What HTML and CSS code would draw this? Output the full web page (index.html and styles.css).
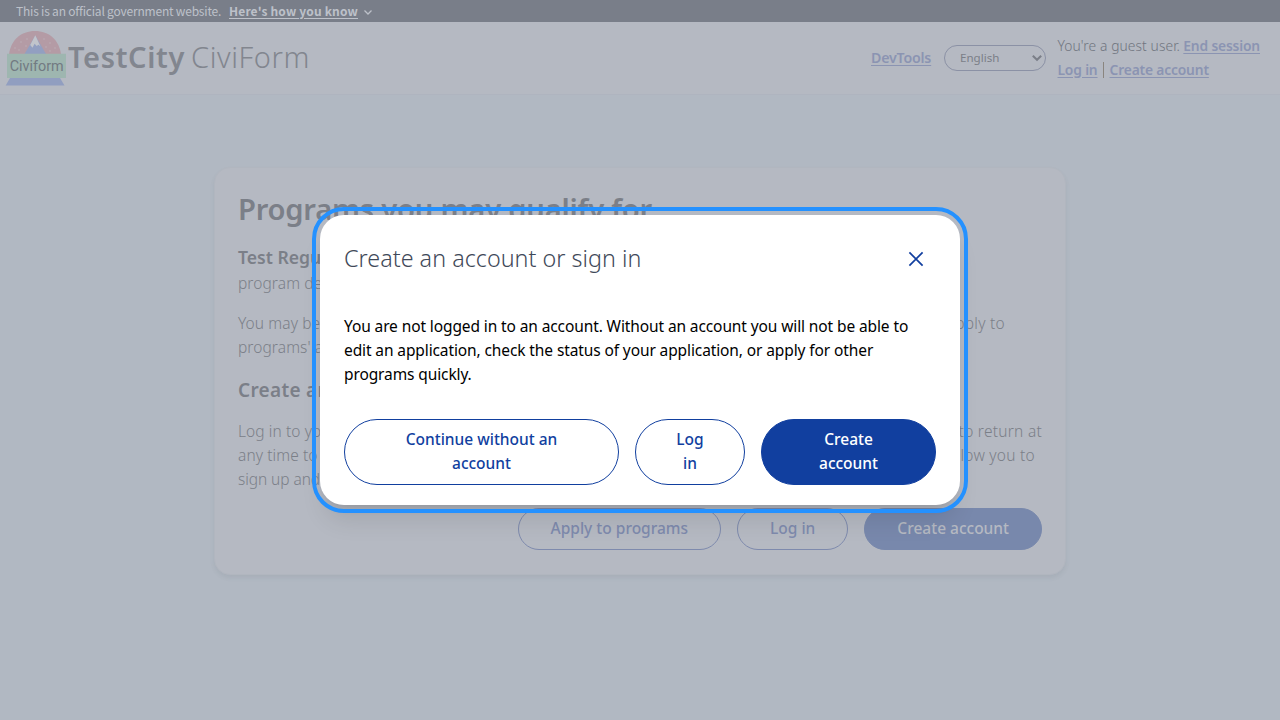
FILE: index.html
```html
<!DOCTYPE html>
<html lang="en">
<head>
<meta charset="utf-8">
<title>TestCity CiviForm</title>
<link rel="stylesheet" href="styles.css">
</head>
<body>
<div class="banner">
  <span class="banner-text">This is an official government website.</span>
  <a class="banner-link">Here's how you know</a>
  <svg class="banner-chevron" width="10" height="8" viewBox="0 0 10 8"><path d="M1.5 2.5 5 6 8.5 2.5" fill="none" stroke="currentColor" stroke-width="1.3"/></svg>
</div>
<header class="header">
  <svg class="logo" width="62" height="58" viewBox="5 29 62 58">
    <path d="M9 54C11 40 21 31 35 31S59 40 61 54Z" fill="#b49ba5"/>
    <path d="M24.5 54 35.3 35.5 46 54Z" fill="#929fc1"/>
    <path d="M35.3 35.2 40.5 46.5 38.5 44.7 36.7 46 34.6 43.7 32.5 47.8 30.2 45Z" fill="#c1c4cb"/>
    <g fill="#bdb1b9"><circle cx="27" cy="39" r=".7"/><circle cx="21" cy="42" r=".7"/><circle cx="26" cy="46" r=".7"/><circle cx="19" cy="50" r=".7"/><circle cx="15" cy="48" r=".7"/><circle cx="44" cy="39" r=".7"/><circle cx="50" cy="43" r=".7"/><circle cx="46" cy="47" r=".7"/><circle cx="55" cy="48" r=".7"/><circle cx="50" cy="51" r=".7"/></g>
    <path d="M7 53.7H66V78H7Z" fill="#9eb6b0"/>
    <path d="M10 78H60L64.5 85.5H5.7Z" fill="#919ec0"/>
    <text class="logo-text" x="9.7" y="71.3" textLength="54" lengthAdjust="spacingAndGlyphs">Civiform</text>
  </svg>
  <div class="brand"><b class="brand-city">TestCity</b><span class="brand-app">CiviForm</span></div>
  <nav class="nav">
    <a class="link devtools">DevTools</a>
    <div class="select"><span>English</span>
      <svg width="10" height="8" viewBox="0 0 10 8"><path d="M.8 1.7 5 5.8 9.2 1.7" fill="none" stroke="currentColor" stroke-width="2"/></svg>
    </div>
    <div class="account">
      <div class="account-row"><span class="guest">You're a guest user.</span><a class="link">End session</a></div>
      <div class="account-row"><a class="link">Log in</a><span class="divider"></span><a class="link">Create account</a></div>
    </div>
  </nav>
</header>
<main class="card">
  <h1 class="card-title">Programs you may qualify for</h1>
  <h2 class="program">Test Regular Program</h2>
  <p class="text">program description</p>
  <div class="text eligible">
    <div class="line line-apply"><span>You may be eligible for other programs.</span><span class="end">Continue to apply to</span></div>
    <div class="line">programs' applications</div>
  </div>
  <h2 class="create-title">Create an account or sign in</h2>
  <div class="text login-text">
    <div class="line line-return"><span>Log in to your account or create one</span><span class="end">to return at</span></div>
    <div class="line line-allow"><span>any time to edit your application</span><span class="end">and will allow you to</span></div>
    <div class="line tight">sign up and apply for other programs.</div>
  </div>
  <div class="card-actions">
    <button class="btn muted">Apply to programs</button>
    <button class="btn muted">Log in</button>
    <button class="btn muted-solid">Create account</button>
  </div>
</main>
<section class="modal" role="dialog" aria-labelledby="modal-title">
  <div class="modal-head">
    <h2 class="modal-title" id="modal-title">Create an account or sign in</h2>
    <svg class="close" width="16" height="16" viewBox="0 0 16 16"><path d="M1.4 1.4 14.6 14.6M14.6 1.4 1.4 14.6" stroke="currentColor" stroke-width="1.7"/></svg>
  </div>
  <p class="modal-text">You are not logged in to an account. Without an account you will not be able to<br>edit an application, check the status of your application, or apply for other<br>programs quickly.</p>
  <div class="modal-actions">
    <button class="btn outline">Continue without an<br>account</button>
    <button class="btn outline">Log<br>in</button>
    <button class="btn solid">Create<br>account</button>
  </div>
</section>
</body>
</html>
```
FILE: styles.css
```css
* { box-sizing: border-box; }

body {
  margin: 0;
  height: 720px;
  overflow: hidden;
  background: #b1b8c2;
  color: #7b7f88;
  font-family: "Noto Sans", sans-serif;
}

h1, h2, p { margin: 0; }

/* Government banner */
.banner {
  display: flex;
  align-items: center;
  height: 22px;
  padding-left: 16px;
  background: #797e89;
  color: #bdc1c9;
  font-family: "Noto Sans CJK SC", sans-serif;
  font-size: 12px;
  line-height: 22px;
  white-space: nowrap;
}
.banner-text { width: 213px; letter-spacing: -0.2px; }
.banner-link {
  width: 129px;
  font-weight: 700;
  letter-spacing: 0.16px;
  text-decoration: underline;
  text-underline-offset: 2px;
}
.banner-chevron { margin: 1px 0 0 5px; }

/* Header */
.header {
  display: flex;
  align-items: center;
  height: 73px;
  padding: 0 20px 1px 5px;
  background: #b5b9c2;
  border-bottom: 1px solid #afb4bf;
}
.logo-text { font-family: Roboto, sans-serif; font-size: 14.5px; fill: #727a82; }
.brand {
  display: flex;
  gap: 6px;
  margin-left: 1px;
  padding-bottom: 2px;
  color: #82868f;
  font-size: 29px;
  line-height: 36px;
}
.brand-city { font-weight: 600; letter-spacing: 0.65px; }
.brand-app { font-weight: 300; letter-spacing: 0.56px; }
.nav {
  display: flex;
  align-items: center;
  margin-left: auto;
  font-size: 13.8px;
  line-height: 24px;
}
.link {
  color: #8b94b2;
  font-weight: 600;
  letter-spacing: -0.16px;
  text-decoration: underline;
  text-underline-offset: 2px;
}
.devtools { width: 73px; font-size: 14.2px; letter-spacing: -0.2px; }
.select {
  display: flex;
  align-items: center;
  justify-content: space-between;
  width: 102px;
  height: 26px;
  padding: 0 3px 0 15px;
  border: 1px solid #8b91a5;
  border-radius: 13px;
  color: #7b7f88;
  font-size: 11.6px;
}
.account { width: 202.5px; margin-left: 11.5px; }
.account-row { display: flex; align-items: center; white-space: nowrap; }
.guest { width: 126.5px; font-weight: 300; letter-spacing: 0.1px; color: #70757f; }
.divider { width: 1px; height: 16px; margin: 0 6px 0 5px; background: #8a857f; }

/* Programs card */
.card {
  width: 852px;
  height: 408px;
  margin: 72px auto 0;
  padding: 25px 23px 0;
  border: 1px solid #b1b6bf;
  border-radius: 16px;
  background: #b5b9c2;
  box-shadow: 0 3px 4px rgba(80, 85, 105, 0.09);
}
.card-title { font-size: 29.2px; font-weight: 600; line-height: 33px; letter-spacing: -0.24px; }
.program { margin-top: 18px; font-size: 17.6px; font-weight: 600; line-height: 27px; }
.text { font-size: 15.5px; font-weight: 300; line-height: 24px; white-space: nowrap; letter-spacing: 0.09px; }
.eligible { margin-top: 16px; }
.line { display: flex; justify-content: space-between; }
.line-apply { width: 767px; }
.line-return { width: 804px; }
.line-allow { width: 797px; }
.end { letter-spacing: 0.26px; }
.tight { letter-spacing: -0.07px; }
.create-title { margin-top: 18px; font-size: 19px; font-weight: 600; line-height: 27px; letter-spacing: 0.3px; }
.login-text { margin-top: 15px; }
.card-actions { display: flex; justify-content: flex-end; gap: 16px; margin-top: 17px; }

/* Buttons */
.btn {
  padding: 0 0 2px;
  border: 1px solid;
  border-radius: 33px;
  background: transparent;
  font: 500 15.5px/24px "Noto Sans", sans-serif;
  white-space: nowrap;
}
.card-actions .btn { height: 42px; padding: 0 32px 2px; }
.muted { color: #7e8aad; }
.muted-solid { border-color: #7888ac; background: #7888ac; color: #b5b9c2; }
.outline { border-color: #113f9f; color: #113f9f; }
.solid { border-color: #113f9f; background: #113f9f; color: #fff; }

/* Dialog shown over the page */
.modal {
  position: absolute;
  top: 215px;
  left: 320px;
  width: 640px;
  height: 290px;
  padding: 23px 24px 24px;
  border-radius: 24px;
  outline: 4px solid #2491ff;
  outline-offset: 4px;
  background: #fff;
  box-shadow: 0 20px 25px -5px rgba(0, 0, 0, 0.1), 0 8px 10px -6px rgba(0, 0, 0, 0.1);
  color: #000;
}
.modal-head { display: flex; align-items: center; justify-content: space-between; height: 39px; padding-right: 12px; }
.modal-title { font-size: 23.3px; font-weight: 300; line-height: 36px; color: #3f4959; letter-spacing: 0.03px; }
.close { margin-top: 2px; color: #113f9f; }
.modal-text { margin-top: 37px; font-size: 15.5px; line-height: 24px; letter-spacing: -0.11px; white-space: nowrap; }
.modal-actions { display: grid; grid-template-columns: 275px 110px 175px; gap: 16px; height: 66px; margin-top: 33px; }
```
